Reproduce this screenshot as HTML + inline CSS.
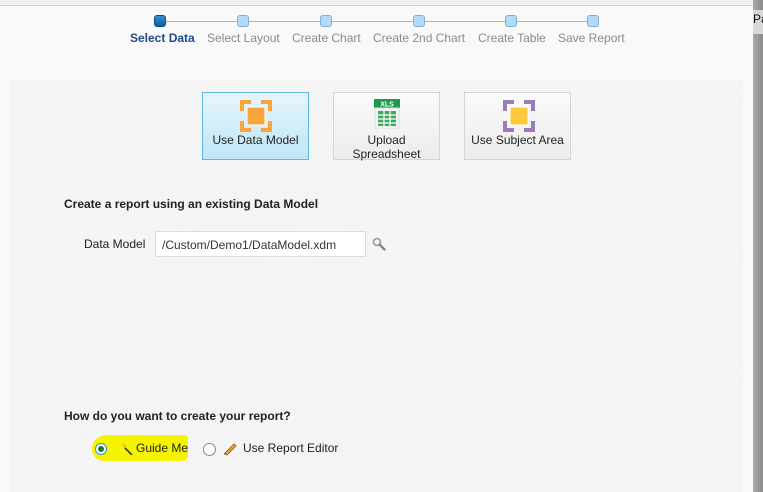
<!DOCTYPE html>
<html><head><style>
body{margin:0;width:763px;height:492px;overflow:hidden;background:#f9f9f9;font-family:"Liberation Sans",sans-serif;position:relative}
.abs{position:absolute}
.top{left:0;top:0;width:753px;height:5px;background:#f0f0f0;border-bottom:1px solid #c9d3de}
.right{left:753px;top:0;width:10px;height:492px;background:linear-gradient(90deg,#aaa,#8a8a8a)}
.pat{left:10px;top:80px;width:733px;height:412px;background:repeating-linear-gradient(135deg,#f6f6f6 0 2px,#f1f1f1 2px 3px)}
.line{top:21px;left:160px;width:433px;height:1px;background:#9db5cf}
.dot{top:15px;width:12px;height:12px;border-radius:3px;background:#b5daf3;border:1px solid #7fb0d8;box-sizing:border-box}
.lbl{top:31px;font-size:12px;color:#8a8a8a;white-space:nowrap}
.btn{top:92px;width:107px;height:68px;box-sizing:border-box;border:1px solid #d4d4d4;background:linear-gradient(#fafafa,#ececec);font-size:12px;color:#222;text-align:center}
.btn .t{position:absolute;left:0;right:0}
</style></head><body>
<div class="abs top"></div>
<div class="abs right"></div>
<div class="abs" style="left:753px;top:10px;width:10px;height:24px;background:#d8d8d8"></div>
<div class="abs" style="left:753px;top:12px;font-size:12px;color:#111">Pa</div>
<div class="abs pat"></div>
<div class="abs line"></div>
<div class="abs dot" style="left:154px;background:linear-gradient(#3d8fd0,#0a5fa6);border-color:#0a4f8c"></div>
<div class="abs dot" style="left:237px"></div>
<div class="abs dot" style="left:320px"></div>
<div class="abs dot" style="left:413px"></div>
<div class="abs dot" style="left:505px"></div>
<div class="abs dot" style="left:587px"></div>
<div class="abs lbl" style="left:130px;color:#1f4a8a;font-weight:bold">Select Data</div>
<div class="abs lbl" style="left:207px">Select Layout</div>
<div class="abs lbl" style="left:292px">Create Chart</div>
<div class="abs lbl" style="left:373px">Create 2nd Chart</div>
<div class="abs lbl" style="left:478px">Create Table</div>
<div class="abs lbl" style="left:558px">Save Report</div>

<div class="abs btn" style="left:202px;border-color:#5db8e8;background:linear-gradient(#e6f5fc,#bfe6f6)">
<svg class="abs" style="left:37px;top:7px" width="32" height="32" viewBox="0 0 32 32"><g fill="#f8a33c"><path d="M0 0h11v4H4v7H0z"/><path d="M32 0H21v4h7v7h4z"/><path d="M0 32h11v-4H4v-7H0z"/><path d="M32 32H21v-4h7v-7h4z"/></g><rect x="7" y="7" width="18" height="18" fill="#f8a33c" stroke="#fff" stroke-width="1"/></svg>
<div class="t" style="top:40px">Use Data Model</div></div>

<div class="abs btn" style="left:333px">
<svg class="abs" style="left:40px;top:6px" width="26" height="30" viewBox="0 0 26 30"><rect x="0" y="0" width="26" height="9" fill="#1e9a4a"/><text x="13" y="7.5" font-size="7" font-weight="bold" fill="#fff" text-anchor="middle" font-family="Liberation Sans">XLS</text><rect x="1" y="9" width="24" height="21" fill="#f4f4f4" stroke="#ddd"/><g fill="#3daa5c"><rect x="4" y="12" width="18" height="15"/></g><g stroke="#fff" stroke-width="1.2"><path d="M4 16h18M4 20h18M4 24h18M10 12v15M16 12v15"/></g></svg>
<div class="t" style="top:40px;line-height:14px">Upload<br>Spreadsheet</div></div>

<div class="abs btn" style="left:464px">
<svg class="abs" style="left:38px;top:7px" width="32" height="32" viewBox="0 0 32 32"><g fill="#9b7bb8"><path d="M0 0h11v4H4v7H0z"/><path d="M32 0H21v4h7v7h4z"/><path d="M0 32h11v-4H4v-7H0z"/><path d="M32 32H21v-4h7v-7h4z"/></g><rect x="7" y="7" width="18" height="18" fill="#fcc83c" stroke="#fff"/></svg>
<div class="t" style="top:40px">Use Subject Area</div></div>

<div class="abs" style="left:64px;top:197px;font-size:12px;font-weight:bold;color:#222">Create a report using an existing Data Model</div>
<div class="abs" style="left:84px;top:237px;font-size:12px;color:#222">Data Model</div>
<div class="abs" style="left:155px;top:231px;width:211px;height:26px;box-sizing:border-box;border:1px solid #dcdcdc;background:#fff;font-size:12px;color:#333;padding:6px 0 0 6px">/Custom/Demo1/DataModel.xdm</div>
<svg class="abs" style="left:372px;top:237px" width="14" height="14" viewBox="0 0 14 14"><circle cx="5" cy="5" r="3.5" fill="none" stroke="#999" stroke-width="1.6"/><path d="M7.5 7.5l5 5" stroke="#888" stroke-width="2.4" stroke-linecap="round"/></svg>

<div class="abs" style="left:64px;top:409px;font-size:12px;font-weight:bold;color:#222">How do you want to create your report?</div>
<div class="abs" style="left:92px;top:435px;width:96px;height:26px;background:#f4f400;border-radius:14px 4px 6px 12px"></div>
<div class="abs" style="left:95px;top:443px;width:12px;height:12px;border-radius:50%;border:1px solid #3b8fd8;box-sizing:border-box;background:#fff"><div style="margin:2px;width:6px;height:6px;border-radius:50%;background:#1a7a2a"></div></div>
<svg class="abs" style="left:120px;top:441px" width="14" height="14" viewBox="0 0 14 14"><path d="M5 7l7 7" stroke="#333" stroke-width="1.6"/><path d="M4 2l1 2 2 1-2 1-1 2-1-2-2-1 2-1z" fill="#f0c020"/></svg>
<div class="abs" style="left:136px;top:441px;font-size:12px;color:#222">Guide Me</div>
<div class="abs" style="left:203px;top:443px;width:13px;height:13px;border-radius:50%;border:1px solid #888;box-sizing:border-box;background:#fff"></div>
<svg class="abs" style="left:222px;top:440px" width="16" height="16" viewBox="0 0 16 16"><path d="M3 13l9-9 2 2-9 9z" fill="#f0a030" stroke="#a05a10" stroke-width="0.8"/><path d="M1.5 14.5l1.5-1.5 1.5 1.5z" fill="#333"/></svg>
<div class="abs" style="left:243px;top:441px;font-size:12px;color:#222">Use Report Editor</div>
</body></html>
